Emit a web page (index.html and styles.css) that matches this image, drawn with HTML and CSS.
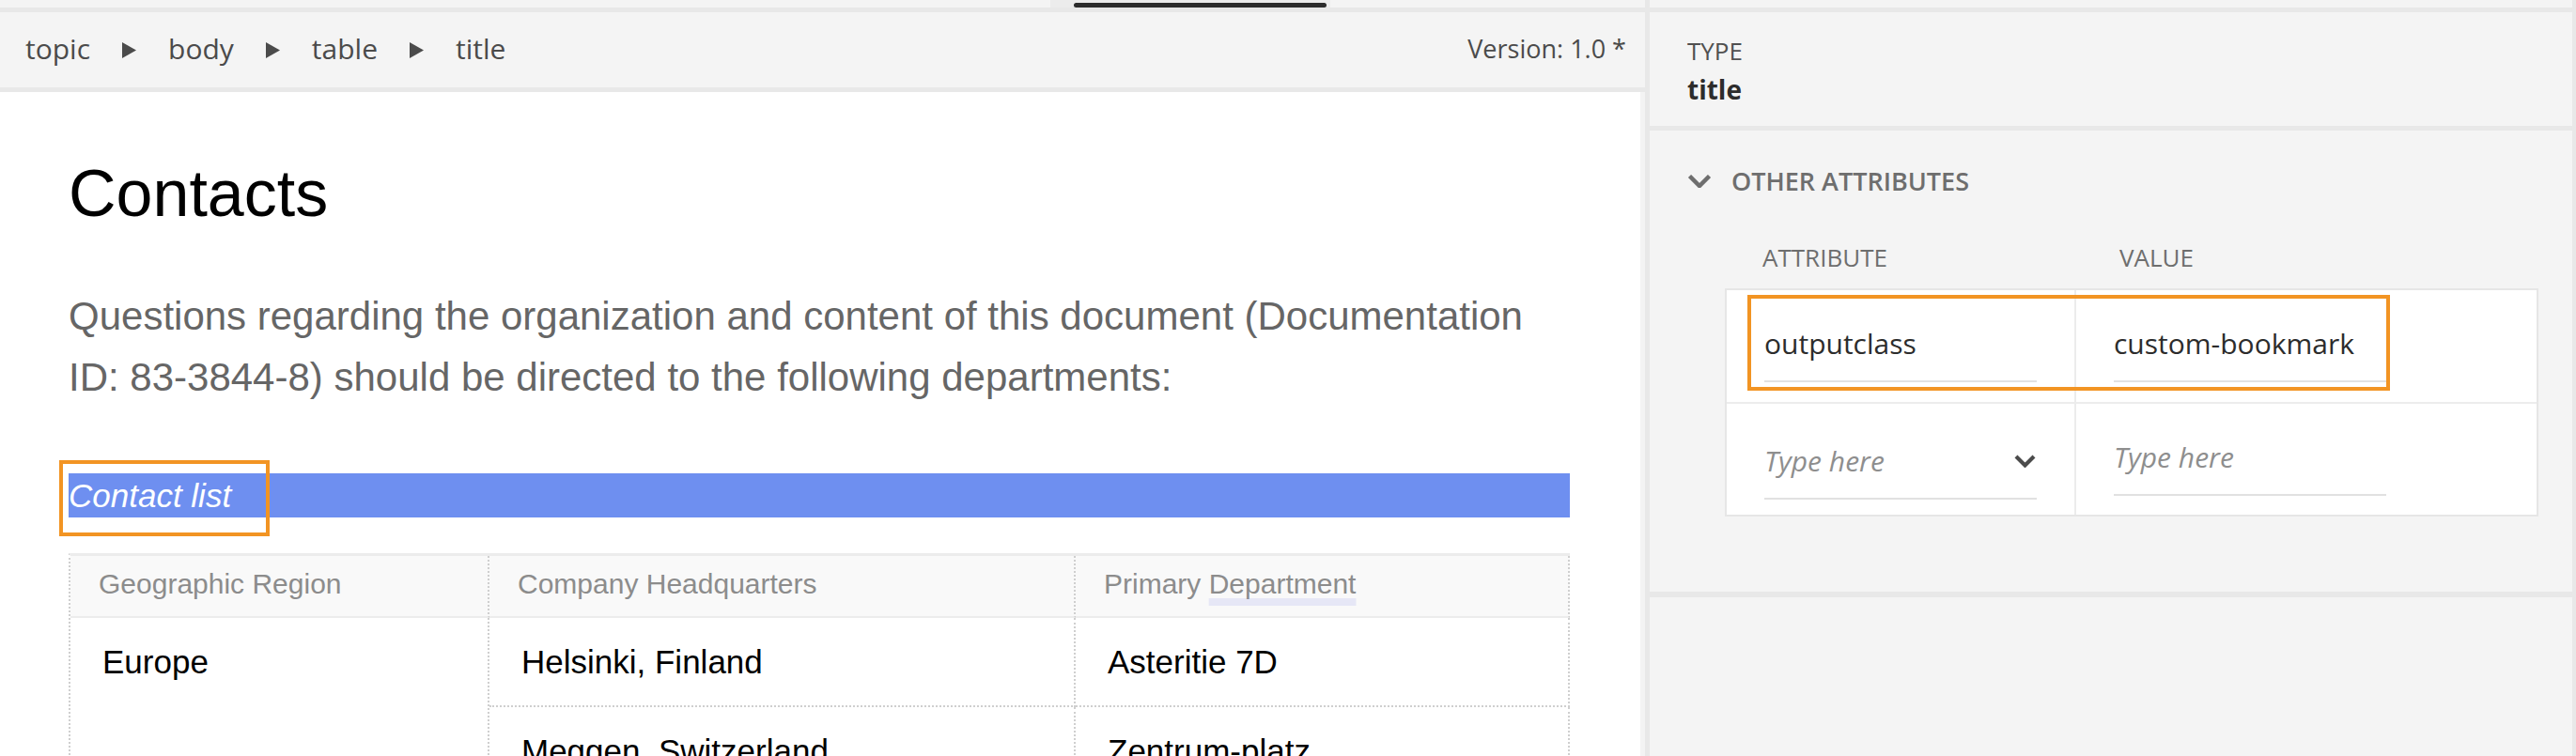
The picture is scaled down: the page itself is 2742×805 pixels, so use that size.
FILE: index.html
```html
<!DOCTYPE html>
<html lang="en">
<head>
<meta charset="utf-8">
<title>Contacts</title>
<link rel="stylesheet" href="styles.css">
</head>
<body>
<div class="app">
  <div class="editor">
    <div class="topstrip">
      <div class="htrack"><div class="hthumb"></div></div>
    </div>
    <div class="crumbs">
      <nav class="path">
        <span>topic</span>
        <svg class="sep" viewBox="0 0 17 17"><polygon points="1,0 16,8.5 1,17"/></svg>
        <span>body</span>
        <svg class="sep" viewBox="0 0 17 17"><polygon points="1,0 16,8.5 1,17"/></svg>
        <span>table</span>
        <svg class="sep" viewBox="0 0 17 17"><polygon points="1,0 16,8.5 1,17"/></svg>
        <span>title</span>
      </nav>
      <span class="version">Version: 1.0 *</span>
    </div>
    <div class="doc">
      <div class="page">
        <h1 class="doc-title">Contacts</h1>
        <p class="doc-para">Questions regarding the organization and content of this document (Documentation ID: 83-3844-8) should be directed to the following departments:</p>
        <div class="caption-wrap">
          <div class="caption">Contact list</div>
          <div class="mark mark-caption"></div>
        </div>
        <table class="contacts">
          <thead>
            <tr>
              <th class="col1">Geographic Region</th>
              <th class="col2">Company Headquarters</th>
              <th class="col3">Primary <span class="spell">Department</span></th>
            </tr>
          </thead>
          <tbody>
            <tr>
              <td rowspan="2">Europe</td>
              <td>Helsinki, Finland</td>
              <td>Asteritie 7D</td>
            </tr>
            <tr>
              <td>Meggen, Switzerland</td>
              <td>Zentrum-platz</td>
            </tr>
          </tbody>
        </table>
      </div>
    </div>
  </div>
  <aside class="props">
    <div class="topstrip"></div>
    <section class="sec-type">
      <div class="type-label">TYPE</div>
      <div class="type-value">title</div>
    </section>
    <section class="sec-attrs">
      <div class="acc-head">
        <svg class="acc-chev" viewBox="0 0 26 14"><polyline points="2.5,1.5 13,12 23.5,1.5"/></svg>
        <span>OTHER ATTRIBUTES</span>
      </div>
      <div class="attrs">
        <div class="attr-head"><span class="h1c">ATTRIBUTE</span><span class="h2c">VALUE</span></div>
        <div class="attr-table">
          <div class="cell c1 r1"><div class="field">outputclass</div></div>
          <div class="cell c2 r1"><div class="field">custom-bookmark</div></div>
          <div class="cell c1 r2 sel"><div class="field select"><span class="ph">Type here</span><svg class="sel-chev" viewBox="0 0 23 14"><polyline points="2,2 11.5,11.5 21,2"/></svg></div></div>
          <div class="cell c2 r2"><div class="field"><span class="ph">Type here</span></div></div>
          <div class="mark mark-attr"></div>
        </div>
      </div>
    </section>
    <section class="sec-rest"></section>
  </aside>
</div>
</body>
</html>
```
FILE: styles.css
```css
* { box-sizing: border-box; }

html, body {
  margin: 0;
  height: 805px;
  overflow: hidden;
}

body {
  font-family: "Open Sans", "Liberation Sans", sans-serif;
  background: #f4f4f4;
}

.app {
  display: flex;
  height: 805px;
}

/* ---------- left editor ---------- */
.editor {
  flex: none;
  width: 1751px;
  display: flex;
  flex-direction: column;
}

.topstrip {
  flex: none;
  height: 13px;
  background: #f4f4f4;
  border-bottom: 5px solid #e8e8e8;
}

.htrack {
  margin-left: 1118px;
  width: 298px;
  height: 8px;
  padding: 3px 0 0 25px;
  background: #ececec;
}

.hthumb {
  width: 269px;
  height: 5px;
  border-radius: 3px;
  background: #2c2c2c;
}

.crumbs {
  flex: none;
  height: 85px;
  padding: 0 20px 3px 27px;
  border-bottom: 5px solid #e8e8e8;
  display: flex;
  align-items: center;
  justify-content: space-between;
  color: #4b4b4b;
  background: #f4f4f4;
}

.path {
  display: flex;
  align-items: center;
  font-size: 30px;
}

.sep {
  width: 17px;
  height: 17px;
  margin: 4px 33px 0;
  fill: #4b4b4b;
}

.version {
  font-size: 27px;
}

.doc {
  flex: 1;
  background: #fff;
  border-right: 5px solid #f3f3f3;
  overflow: hidden;
}

.page {
  padding: 68px 75px 0 73px;
  font-family: "Liberation Sans", Arial, sans-serif;
}

.doc-title {
  margin: 0;
  font-size: 70px;
  font-weight: 400;
  line-height: normal;
  color: #000;
}

.doc-para {
  margin: 58px 0 0;
  font-size: 42px;
  line-height: 65px;
  color: #666;
}

.caption-wrap {
  position: relative;
  margin-top: 70px;
}

.caption {
  height: 47px;
  line-height: 47px;
  font-size: 35px;
  font-style: italic;
  color: #fff;
  background: #6e8ff0;
}

.mark {
  position: absolute;
  border: 4px solid #f29423;
}

.mark-caption {
  left: -10px;
  top: -14px;
  width: 224px;
  height: 81px;
}

.contacts {
  margin-top: 38px;
  width: 1598px;
  table-layout: fixed;
  border-collapse: separate;
  border-spacing: 0;
  border-top: 3px solid #ececec;
  border-left: 2px dotted #cfcfcf;
}

.contacts th {
  height: 66px;
  padding: 13px 30px 17px;
  line-height: 34px;
  font-size: 30px;
  font-weight: 400;
  text-align: left;
  vertical-align: top;
  color: #8c8c8c;
  background: #f9f9f9;
  border-bottom: 2px solid #ececec;
  border-right: 2px dotted #cfcfcf;
}

.contacts .col1 { width: 446px; }
.contacts .col2 { width: 624px; }
.contacts .col3 { width: 526px; }

.spell {
  text-decoration: underline;
  text-decoration-color: #e6e7f6;
  text-decoration-thickness: 8px;
  text-underline-offset: 5px;
  text-decoration-skip-ink: none;
}

.contacts td {
  padding: 27px 34px;
  line-height: 39px;
  font-size: 35px;
  color: #000;
  vertical-align: top;
  border-right: 2px dotted #cfcfcf;
  border-bottom: 2px dotted #cfcfcf;
}

/* ---------- right properties panel ---------- */
.props {
  flex: 1;
  display: flex;
  flex-direction: column;
  background: #f4f4f4;
  border-left: 5px solid #e8e8e8;
  border-right: 4px solid #e8e8e8;
}

.sec-type {
  flex: none;
  height: 126px;
  padding: 23px 40px 0;
  border-bottom: 5px solid #e8e8e8;
}

.type-label {
  font-size: 26px;
  line-height: 36px;
  color: #505050;
}

.type-value {
  margin-top: 4px;
  font-size: 28px;
  font-weight: 700;
  line-height: 38px;
  color: #2c2c2c;
}

.sec-attrs {
  flex: none;
  height: 497px;
  padding: 35px 36px 0 40px;
  border-bottom: 6px solid #e8e8e8;
}

.acc-head {
  display: flex;
  align-items: center;
  height: 37px;
  font-size: 27px;
  font-weight: 600;
  color: #6e6e6e;
}

.acc-chev {
  width: 26px;
  height: 14px;
  margin-right: 21px;
  fill: none;
  stroke: #6e6e6e;
  stroke-width: 4.5;
}

.attrs {
  margin-left: 40px;
  width: 866px;
}

.attr-head {
  display: grid;
  grid-template-columns: 372px 1fr;
  margin: 45px 0 15px;
  font-size: 26px;
  line-height: 36px;
  color: #6e6e6e;
}

.h1c { padding-left: 40px; }
.h2c { padding-left: 48px; }

.attr-table {
  position: relative;
  display: grid;
  grid-template-columns: 372px 490px;
  border: 2px solid #e6e6e6;
  background: #fff;
}

.cell {
  padding: 36px 0 0 40px;
}

.cell.c1 { border-right: 2px solid #ececec; }
.cell.r1 { height: 121px; border-bottom: 2px solid #ececec; }
.cell.r2 { height: 118px; }
.cell.sel { padding-top: 40px; }

.field {
  width: 290px;
  padding-bottom: 19px;
  line-height: 41px;
  font-size: 30px;
  color: #2c2c2c;
  border-bottom: 2px solid #e1e1e1;
}

.select {
  display: flex;
  align-items: center;
  justify-content: space-between;
}

.ph {
  font-style: italic;
  color: #8e8e8e;
}

.sel-chev {
  width: 23px;
  height: 14px;
  margin-right: 1px;
  fill: none;
  stroke: #4b4b4b;
  stroke-width: 4.2;
}

.mark-attr {
  left: 22px;
  top: 5px;
  width: 684px;
  height: 102px;
}

.sec-rest {
  flex: 1;
}
```
